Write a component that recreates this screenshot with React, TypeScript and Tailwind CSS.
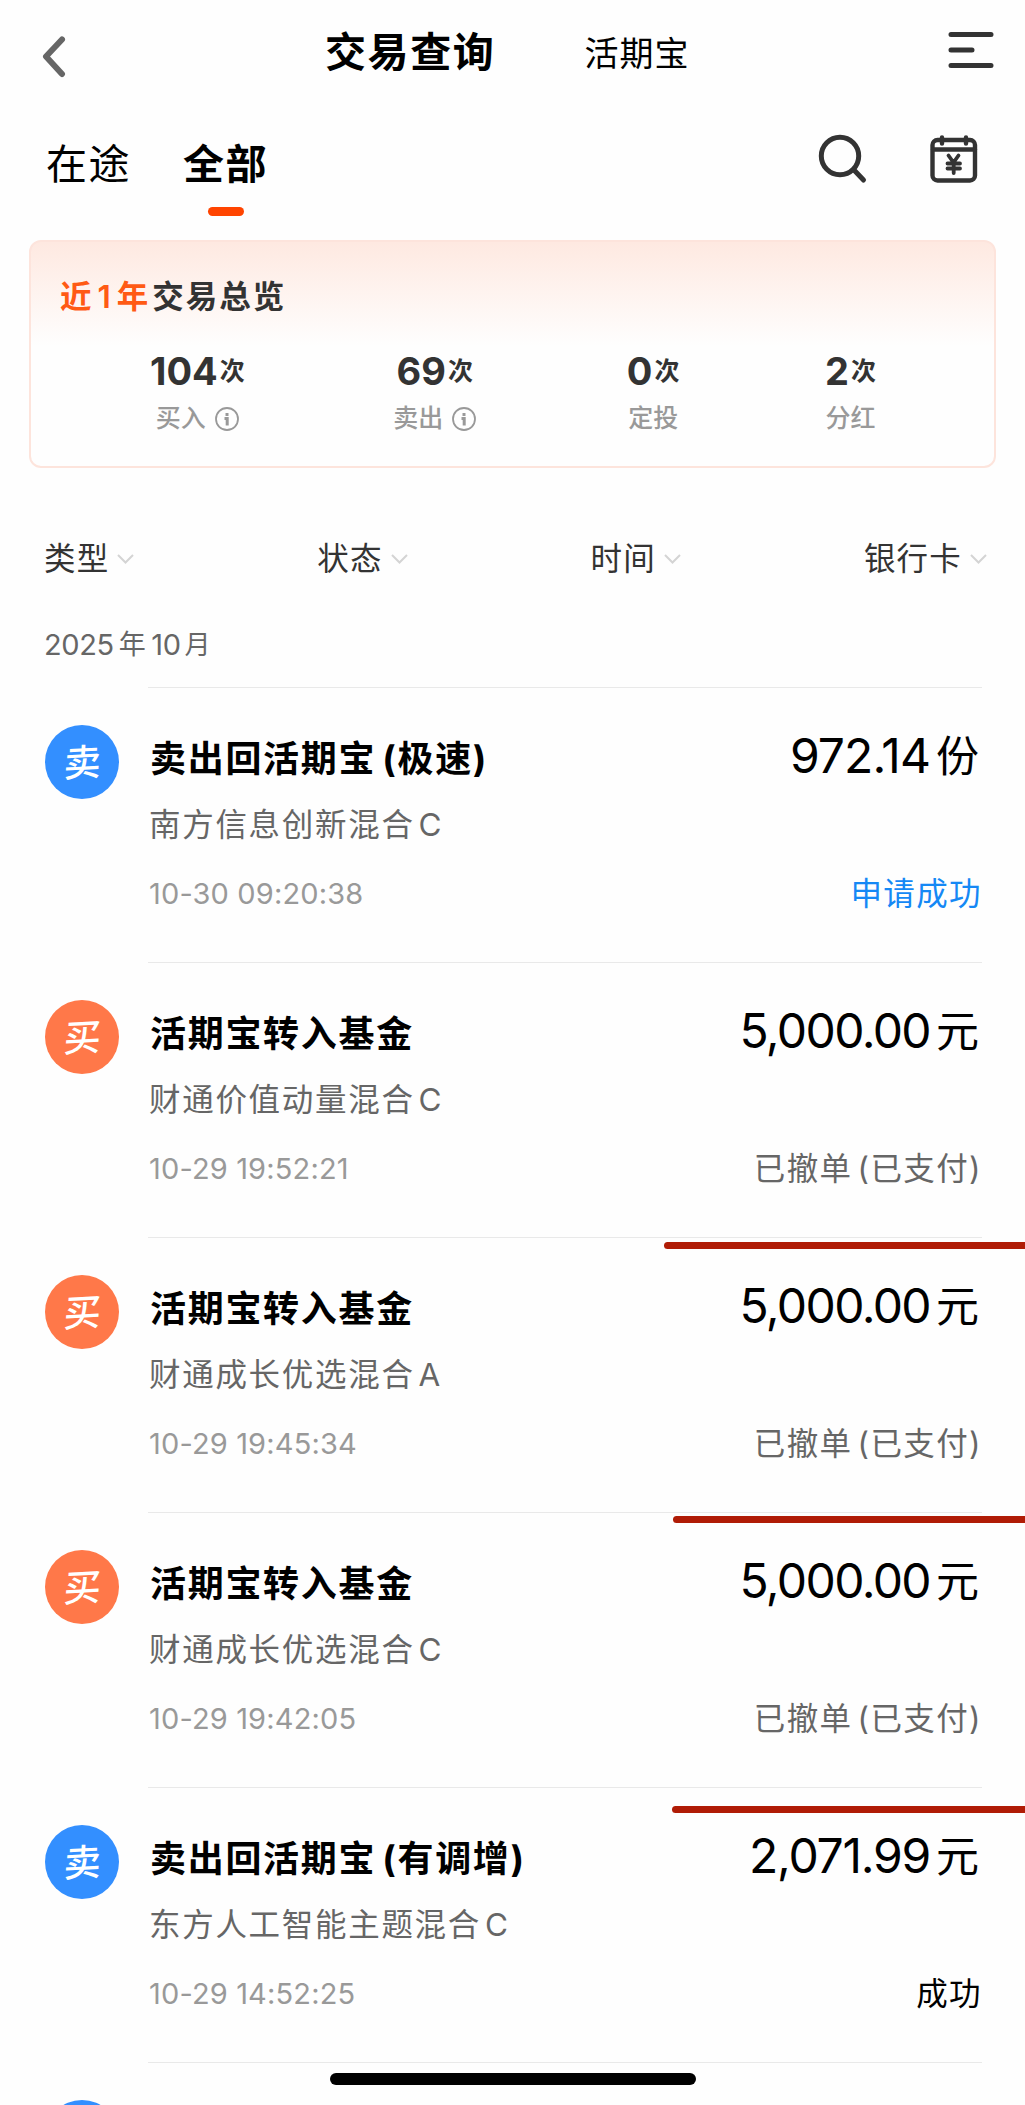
/* -------------------------------------------------------------------------- */
/*                                    TYPES                                   */
/* -------------------------------------------------------------------------- */

interface Stat {
    label: string
    count: string
    info: boolean
}

interface Trade {
    id: number
    kind: "buy" | "sell"
    title: string
    note?: string
    fund: string
    share?: string
    time: string
    amount: string
    amountClass: string
    unit: string
    status: string
    statusNote?: string
    statusClass: string
    mark?: string
}

/* ----------------------------------- data ---------------------------------- */

const stats: Stat[] = [
    { label: "买入", count: "104", info: true },
    { label: "卖出", count: "69", info: true },
    { label: "定投", count: "0", info: false },
    { label: "分红", count: "2", info: false },
]

const filters = ["类型", "状态", "时间", "银行卡"]

const trades: Trade[] = [
    { id: 1, kind: "sell", title: "卖出回活期宝", note: "(极速)", fund: "南方信息创新混合", share: "C", time: "10-30 09:20:38", amount: "972.14", amountClass: "tracking-[-0.900px]", unit: "份", status: "申请成功", statusClass: "text-[#1588f5]" },
    { id: 2, kind: "buy", title: "活期宝转入基金", fund: "财通价值动量混合", share: "C", time: "10-29 19:52:21", amount: "5,000.00", amountClass: "tracking-[-1.600px]", unit: "元", status: "已撤单", statusNote: "(已支付)", statusClass: "text-[#666]" },
    { id: 3, kind: "buy", title: "活期宝转入基金", fund: "财通成长优选混合", share: "A", time: "10-29 19:45:34", amount: "5,000.00", amountClass: "tracking-[-1.600px]", unit: "元", status: "已撤单", statusNote: "(已支付)", statusClass: "text-[#666]", mark: "top-[5px] left-[664px]" },
    { id: 4, kind: "buy", title: "活期宝转入基金", fund: "财通成长优选混合", share: "C", time: "10-29 19:42:05", amount: "5,000.00", amountClass: "tracking-[-1.600px]", unit: "元", status: "已撤单", statusNote: "(已支付)", statusClass: "text-[#666]", mark: "top-[4px] left-[673px]" },
    { id: 5, kind: "sell", title: "卖出回活期宝", note: "(有调增)", fund: "东方人工智能主题混合", share: "C", time: "10-29 14:52:25", amount: "2,071.99", amountClass: "tracking-[-1.250px]", unit: "元", status: "成功", statusClass: "text-black", mark: "top-[19px] left-[672px]" },
]

/* ---------------------------------- icons ---------------------------------- */

function BackIcon() {
    return (
        <svg width="24" height="42" viewBox="0 0 24 42" fill="none" stroke="#666" strokeWidth="6" strokeLinecap="round" strokeLinejoin="round">
            <path d="M20 3.500 4 20.500 20 38" />
        </svg>
    )
}

function MenuIcon() {
    return (
        <svg width="46" height="38" viewBox="0 0 46 38" fill="none" stroke="#333" strokeWidth="5" strokeLinecap="round">
            <path d="M3 3.500h40M3 19h21M3 34.500h40" />
        </svg>
    )
}

function SearchIcon() {
    return (
        <svg width="50" height="50" viewBox="0 0 50 50" fill="none" stroke="#333" strokeWidth="5" strokeLinecap="round">
            <circle cx="22" cy="22" r="18.700" />
            <path d="m36 36 9.500 10" />
        </svg>
    )
}

function CalendarIcon() {
    return (
        <svg width="48" height="50" viewBox="0 0 48 50" fill="none" stroke="#333" strokeWidth="4.400" strokeLinecap="round" strokeLinejoin="round">
            <rect x="2.500" y="6" width="42.500" height="40.500" rx="5" />
            <path d="M3 15.500h42M12 3.500v6M36 3.500v6" />
            <path strokeWidth="3.800" d="m18.500 21.500 5 7 5-7M17.500 29.500h12.500M17.500 34.500h12.500M23.700 29v10" />
        </svg>
    )
}

function InfoIcon() {
    return (
        <svg width="24" height="24" viewBox="0 0 24 24" fill="none" stroke="#999">
            <circle cx="12" cy="12" r="11" strokeWidth="1.800" />
            <path strokeWidth="3" d="M12 6v3M9.500 11.500h2.700v7" />
        </svg>
    )
}

function ArrowIcon() {
    return (
        <svg width="17" height="11" viewBox="0 0 17 11" fill="none" stroke="#d4d4d4" strokeWidth="2">
            <path d="m1 1 7.500 7.500L16 1" />
        </svg>
    )
}

/* ----------------------------------- rows ---------------------------------- */

function Badge({ kind }: { kind: Trade["kind"] }) {
    return (
        <div className={`flex size-[74px] shrink-0 items-center justify-center rounded-full ${kind === "sell" ? "bg-[#338fff]" : "bg-[#ff7849]"}`}>
            <span className="-rotate-3 -skew-x-6 text-[37px] leading-none font-medium text-white">{kind === "sell" ? "卖" : "买"}</span>
        </div>
    )
}

function TradeRow({ trade }: { trade: Trade }) {
    return (
        <div className="relative flex h-[275px] shrink-0 pr-[43px] pl-[45px]">
            <div className="mt-[38px] mr-[29px] h-[74px]">
                <Badge kind={trade.kind} />
            </div>
            <div className="flex flex-1 justify-between border-t border-[#e9e9e9] pt-[40px] pl-px">
                <div className="flex flex-col whitespace-nowrap">
                    <div className="flex h-[62px] items-center pl-px text-[36px] font-bold tracking-[1.700px]">
                        {trade.title}
                        {trade.note && <span className="ml-[6px]">{trade.note}</span>}
                    </div>
                    <div className="flex h-[70px] items-center text-[31.500px] tracking-[1.700px] text-[#666]">
                        {trade.fund}
                        <span className="ml-[4px]">{trade.share}</span>
                    </div>
                    <div className="flex h-[68px] items-center text-[29px] tracking-[0.150px] text-[#999]">{trade.time}</div>
                </div>
                <div className="flex flex-col items-end whitespace-nowrap">
                    <div className="mr-[3px] flex h-[56px] items-center">
                        <span className={`text-[48px] ${trade.amountClass}`}>{trade.amount}</span>
                        <span className="ml-[6px] text-[43px]">{trade.unit}</span>
                    </div>
                    <div className={`mt-[76px] flex h-[68px] items-center text-[31.500px] tracking-[1.400px] ${trade.statusClass}`}>
                        {trade.status}
                        {trade.statusNote && <span className="ml-[5px]">{trade.statusNote}</span>}
                    </div>
                </div>
            </div>
            {trade.mark && <div className={`absolute right-0 h-[7px] rounded-l-full bg-[#b01c06] ${trade.mark}`} />}
        </div>
    )
}

/* ----------------------------------- page ---------------------------------- */

export default function App() {
    return (
        <div className="relative flex h-[2105px] w-[1025px] flex-col overflow-hidden bg-[#fefefe] font-['Inter','Noto_Sans_CJK_SC',sans-serif] text-black">
            {/* title bar */}
            <header className="flex h-[106px] shrink-0 items-center pr-[31px] pl-[42px] whitespace-nowrap">
                <div className="mt-[7px]">
                    <BackIcon />
                </div>
                <h1 className="ml-[259px] text-[41px] font-semibold tracking-[1.600px]">交易查询</h1>
                <span className="ml-[89px] text-[34px] tracking-[1.100px]">活期宝</span>
                <div className="-mt-[6px] ml-auto">
                    <MenuIcon />
                </div>
            </header>

            {/* tabs */}
            <div className="flex h-[134px] shrink-0 pr-[47px] pl-[46px]">
                <div className="mt-[28px] text-[41px] leading-[60px] tracking-[1.500px]">在途</div>
                <div className="mt-[28px] ml-[52px] flex flex-col items-center">
                    <span className="text-[41px] leading-[60px] font-bold tracking-[1.500px]">全部</span>
                    <span className="mt-[13px] h-[9px] w-[36px] rounded-full bg-[#ff4400]" />
                </div>
                <div className="mt-[27.500px] ml-auto flex gap-[62px]">
                    <SearchIcon />
                    <CalendarIcon />
                </div>
            </div>

            {/* yearly overview */}
            <section className="mx-[29px] h-[228px] shrink-0 rounded-xl border-2 border-[#fde4dc] bg-linear-to-b from-[#fee9e1] to-[#fefefe] to-[104px]">
                <h2 className="mt-[30px] ml-[29px] text-[31.500px] leading-[50px] font-semibold tracking-[2px] text-[#333]">
                    <span className="mr-[2px] text-[#ff5a14]">
                        近<span className="mx-[4px]">1</span>年
                    </span>
                    交易总览
                </h2>
                <div className="mt-[24px] flex justify-between pr-[118px] pl-[119px]">
                    {stats.map((stat) => (
                        <div key={stat.label} className="flex flex-col items-center nth-[2]:pl-[3px] nth-[3]:pl-[5px]">
                            <div className="flex h-[50px] items-center leading-[50px] font-bold text-[#333]">
                                <span className="text-[38px]">{stat.count}</span>
                                <span className="ml-[2px] text-[25px]">次</span>
                            </div>
                            <div className="flex h-[46px] items-center gap-[9px] text-[25px] font-medium text-[#999]">
                                {stat.label}
                                {stat.info && <InfoIcon />}
                            </div>
                        </div>
                    ))}
                </div>
            </section>

            {/* filters */}
            <div className="mt-[66px] flex h-[50px] shrink-0 items-center justify-between pr-[38px] pl-[44px]">
                {filters.map((name) => (
                    <div key={name} className="flex items-center gap-[8px] text-[31.500px] tracking-[1.200px] text-[#333]">
                        {name}
                        <ArrowIcon />
                    </div>
                ))}
            </div>

            <div className="mt-[36px] flex h-[67px] shrink-0 items-start pl-[44px] text-[29px] leading-[50px] tracking-[-0.400px] text-[#666]">
                <span>2025</span>
                <span className="mr-[6px] ml-[5px] text-[27px]">年</span>
                <span>10</span>
                <span className="ml-[4px] text-[26px]">月</span>
            </div>

            {/* records */}
            {trades.map((trade) => (
                <TradeRow key={trade.id} trade={trade} />
            ))}
            <div className="flex shrink-0 pr-[43px] pl-[45px]">
                <div className="mt-[38px] mr-[29px] size-[74px] rounded-full bg-[#338fff]" />
                <div className="flex-1 border-t border-[#e9e9e9]" />
            </div>

            {/* home indicator */}
            <div className="absolute bottom-[20px] left-[330px] h-[12px] w-[366px] rounded-full bg-black" />
        </div>
    )
}
